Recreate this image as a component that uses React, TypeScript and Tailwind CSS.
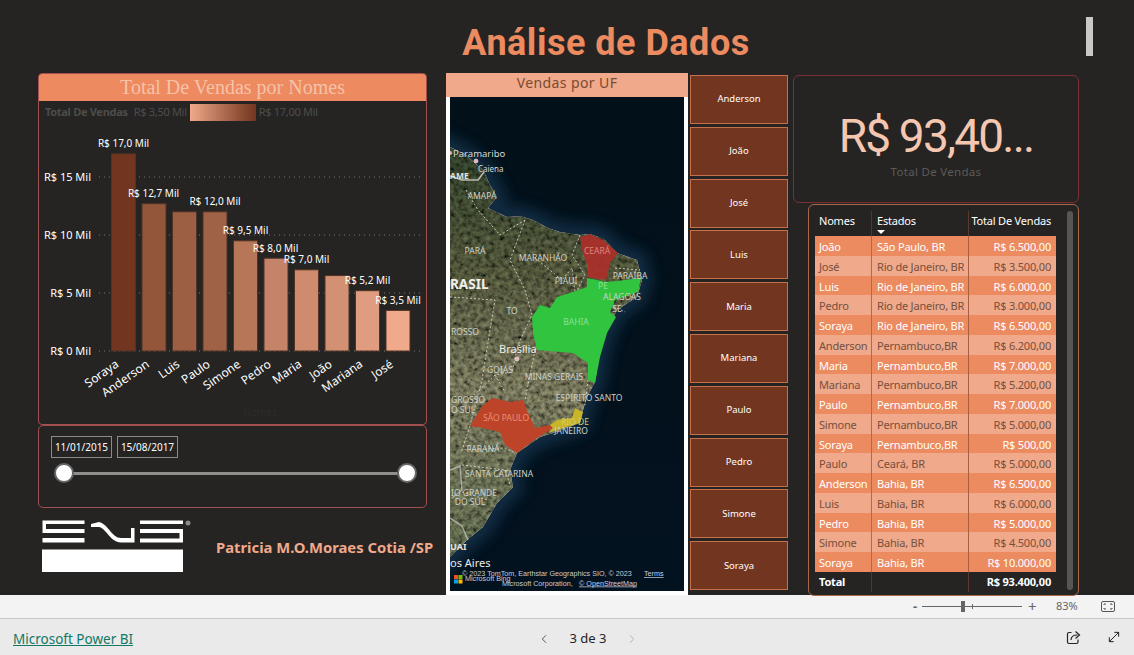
import React from 'react';
import { ChevronLeft, ChevronRight, MoveDiagonal } from 'lucide-react';

const bars = [
  { nome: 'Soraya', valor: 17, label: 'R$ 17,0 Mil', cor: '#72351f', lx: 123.5 },
  { nome: 'Anderson', valor: 12.7, label: 'R$ 12,7 Mil', cor: '#93563b', lx: 153.5 },
  { nome: 'Luis', valor: 12, label: '', cor: '#9c5f43', lx: 0 },
  { nome: 'Paulo', valor: 12, label: 'R$ 12,0 Mil', cor: '#9f6246', lx: 215 },
  { nome: 'Simone', valor: 9.5, label: 'R$ 9,5 Mil', cor: '#b87658', lx: 245.5 },
  { nome: 'Pedro', valor: 8, label: 'R$ 8,0 Mil', cor: '#c5836a', lx: 275.5 },
  { nome: 'Maria', valor: 7, label: 'R$ 7,0 Mil', cor: '#ce8b6e', lx: 306.5 },
  { nome: 'João', valor: 6.5, label: '', cor: '#d39174', lx: 0 },
  { nome: 'Mariana', valor: 5.2, label: 'R$ 5,2 Mil', cor: '#e09c80', lx: 367.5 },
  { nome: 'José', valor: 3.5, label: 'R$ 3,5 Mil', cor: '#f0a98a', lx: 398 },
];

const slicers = ['Anderson', 'João', 'José', 'Luis', 'Maria', 'Mariana', 'Paulo', 'Pedro', 'Simone', 'Soraya'];

const rows = [
  ['João', 'São Paulo, BR', 'R$ 6.500,00'],
  ['José', 'Rio de Janeiro, BR', 'R$ 3.500,00'],
  ['Luis', 'Rio de Janeiro, BR', 'R$ 6.000,00'],
  ['Pedro', 'Rio de Janeiro, BR', 'R$ 3.000,00'],
  ['Soraya', 'Rio de Janeiro, BR', 'R$ 6.500,00'],
  ['Anderson', 'Pernambuco,BR', 'R$ 6.200,00'],
  ['Maria', 'Pernambuco,BR', 'R$ 7.000,00'],
  ['Mariana', 'Pernambuco,BR', 'R$ 5.200,00'],
  ['Paulo', 'Pernambuco,BR', 'R$ 7.000,00'],
  ['Simone', 'Pernambuco,BR', 'R$ 5.000,00'],
  ['Soraya', 'Pernambuco,BR', 'R$ 500,00'],
  ['Paulo', 'Ceará, BR', 'R$ 5.000,00'],
  ['Anderson', 'Bahia, BR', 'R$ 6.500,00'],
  ['Luis', 'Bahia, BR', 'R$ 6.000,00'],
  ['Pedro', 'Bahia, BR', 'R$ 5.000,00'],
  ['Simone', 'Bahia, BR', 'R$ 4.500,00'],
  ['Soraya', 'Bahia, BR', 'R$ 10.000,00'],
];

const mapLabels: [string, number, number][] = [
  ['AMAPÁ', 482, 199],
  ['PARÁ', 475, 254],
  ['MARANHÃO', 543, 261],
  ['PIAUÍ', 566, 284],
  ['PARAÍBA', 630, 279],
  ['ALAGOAS', 622, 300],
  ['SE', 617, 312],
  ['TO', 512, 314],
  ['GOIÁS', 500, 373],
  ['MINAS GERAIS', 554, 380],
  ['ESPÍRITO SANTO', 589, 401],
  ['PARANÁ', 483, 452],
  ['SANTA CATARINA', 499, 477],
  ['DO SUL', 470, 505],
];

const coast =
  'M450 147 L466 155 L483 170 L490 185 L497 197 L488 208 L507 217 L520 216 L533 220 L548 228 L560 232 L580 235 L590 234 L604 239 L617 253 L637 260 L642 280 L637 297 L617 310 L612 320 L607 330 L600 350 L595 382 L587 397 L583 410 L580 423 L553 433 L540 437 L517 453 L510 470 L513 487 L497 503 L483 527 L467 540 L450 557 Z';

const Chart = () => (
  <svg viewBox="39 122 387 300" className="block w-[387px] h-[300px]" fontFamily="'Noto Sans', sans-serif">
    {[
      [177, 'R$ 15 Mil'],
      [235, 'R$ 10 Mil'],
      [293, 'R$ 5 Mil'],
      [351, 'R$ 0 Mil'],
    ].map(([y, t]) => (
      <g key={t}>
        <line x1="99" x2="423" y1={y} y2={y} stroke="#77756f" strokeWidth="1" strokeDasharray="1 4" />
        <text x="91" y={Number(y) + 4} textAnchor="end" fontSize="11" fill="#fff">
          {t}
        </text>
      </g>
    ))}
    {bars.map((b, i) => {
      const x = 111.5 + i * 30.5;
      const h = b.valor * 11.6;
      return (
        <g key={b.nome}>
          <rect x={x} y={351 - h} width="24" height={h} fill={b.cor} stroke="#4f3326" strokeWidth="1" />
          <text transform={`translate(${x + 8} 366) rotate(-35)`} textAnchor="end" fontSize="12" fill="#fff">
            {b.nome}
          </text>
        </g>
      );
    })}
    {bars
      .filter((b) => b.label)
      .map((b) => (
        <text key={b.nome} x={b.lx} y={351 - b.valor * 11.6 - 6.5} textAnchor="middle" fontSize="10" fill="#fff">
          {b.label}
        </text>
      ))}
    <text x="260" y="416" textAnchor="middle" fontSize="10" fill="#2d2c2b">
      Nomes
    </text>
  </svg>
);

const BrazilMap = () => (
  <svg viewBox="450 97 234 494" className="block w-[234px] h-[494px]" fontFamily="'Noto Sans', sans-serif">
    <defs>
      <linearGradient id="land" x1="0" y1="0" x2="0" y2="1">
        <stop offset="0" stopColor="#2e3d28" />
        <stop offset="0.3" stopColor="#4f5439" />
        <stop offset="0.6" stopColor="#75745a" />
        <stop offset="1" stopColor="#5a6549" />
      </linearGradient>
      <linearGradient id="ocean" x1="0" y1="0" x2="0" y2="1">
        <stop offset="0" stopColor="#021019" />
        <stop offset="1" stopColor="#03121f" />
      </linearGradient>
      <filter id="grain" x="0" y="0" width="100%" height="100%">
        <feTurbulence type="fractalNoise" baseFrequency="0.22" numOctaves="3" seed="7" />
        <feColorMatrix values="1.3 0 0 0 -0.15  1.3 0 0 0 -0.15  1.3 0 0 0 -0.15  0 0 0 0 1" />
        <feComposite in2="SourceAlpha" operator="in" result="noise" />
        <feBlend in="noise" in2="SourceGraphic" mode="overlay" />
      </filter>
      <filter id="soft" x="-20%" y="-20%" width="140%" height="140%">
        <feGaussianBlur stdDeviation="7" />
      </filter>
    </defs>
    <rect x="450" y="97" width="234" height="494" fill="url(#ocean)" />
    <path d={coast} fill="none" stroke="#123650" strokeWidth="20" filter="url(#soft)" opacity="0.75" />
    <path d={coast} fill="url(#land)" filter="url(#grain)" />
    <path d="M450 176 L462 180 L478 180 L484 172" fill="none" stroke="#b9bfb4" strokeWidth="1.5" />
    <path d="M450 518 L462 526 L468 540 M450 470 L460 466 L462 490 L452 498" fill="none" stroke="#b9bfb4" strokeWidth="1.5" opacity="0.8" />
    <g fill="none" stroke="#e2e2d6" strokeWidth="1" strokeDasharray="2 2" opacity="0.8">
      <path d="M466 190 L478 210 L500 235 L525 220" />
      <path d="M525 220 L510 260 L525 290 L532 315 L518 345 L512 372 L495 375 L474 395" />
      <path d="M580 235 L572 255 L585 275 L575 295" />
      <path d="M535 258 L562 280 L572 268 L575 292" />
      <path d="M450 297 L495 300 L490 330 L482 380 L470 425" />
      <path d="M518 345 L535 350 M495 375 L505 392 M535 350 L525 400 M588 380 L585 405" />
      <path d="M470 426 L462 450 L505 448 L513 452 M462 465 L505 470 L510 485 M462 492 L488 500" />
      <path d="M615 268 L640 270 M612 290 L635 298 M610 305 L625 312" />
    </g>
    <path d="M580 237 L590 234 L603 240 L618 253 L610 263 L606 280 L587 277 L588 267 L582 250 Z" fill="#a9302a" opacity="0.95" />
    <path
      d="M587 278 L606 282 L617 281 L641 278 L638 292 L615 300 L610 312 L616 317 L607 333 L600 357 L595 383 L588 380 L588 363 L573 353 L537 350 L533 333 L532 317 L540 305 L550 308 L557 297 L573 292 L587 287 Z"
      fill="#31c43e"
    />
    <path
      d="M470 426 L483 405 L493 398 L510 402 L523 400 L528 413 L535 428 L550 425 L553 428 L537 438 L517 453 L505 445 L500 432 L483 428 Z"
      fill="#bd4329"
    />
    <path d="M550 425 L557 420 L572 418 L575 408 L583 412 L580 423 L563 428 L548 433 L553 428 Z" fill="#c9b628" />
    <g fontSize="8.5" fill="#cdd0c8" textAnchor="middle">
      {mapLabels.map(([t, x, y]) => (
        <text key={t} x={x} y={y}>
          {t}
        </text>
      ))}
      <text x="451" y="335" textAnchor="start">ROSSO</text>
      <text x="451" y="403" textAnchor="start">GROSSO</text>
      <text x="451" y="412.5" textAnchor="start">O SUL</text>
      <text x="451" y="496" textAnchor="start">IO GRANDE</text>
      <text x="575" y="425" fill="#d8c96c">RIO DE</text>
      <text x="571" y="434">JANEIRO</text>
      <text x="597" y="254" fill="#e08480">CEARÁ</text>
      <text x="603" y="289" fill="#8fe098">PE</text>
      <text x="576" y="325" fill="#8fe098">BAHIA</text>
      <text x="506" y="421" fill="#ea8f75">SÃO PAULO</text>
    </g>
    <circle cx="450" cy="153" r="2" fill="#f0b0b8" />
    <circle cx="476" cy="161" r="2" fill="#f0b0b8" stroke="#fff" strokeWidth="0.5" />
    <circle cx="517" cy="359" r="2" fill="#f0b0b8" stroke="#fff" strokeWidth="0.5" />
    <text x="453" y="157" fontSize="9.5" fill="#d8d8d2">Paramaribo</text>
    <text x="478" y="172" fontSize="8" fill="#d8d8d2">Caiena</text>
    <text x="450" y="179" fontSize="8.5" fontWeight="700" fill="#e4e4de">AME</text>
    <text x="450" y="289" fontSize="13.5" fontWeight="700" fill="#f0f0ea">RASIL</text>
    <text x="499" y="353" fontSize="11" fill="#ecece6">Brasília</text>
    <text x="450" y="550" fontSize="9" fontWeight="700" fill="#e4e4de">UAI</text>
    <text x="450" y="567" fontSize="11" fill="#ecece6">os Aires</text>
    <g fontFamily="'Liberation Sans', sans-serif" fontSize="7.2" fill="#c9ccd2">
      <text x="462" y="576">© 2023 TomTom, Earthstar Geographics SIO, © 2023</text>
      <text x="644" y="576" textDecoration="underline" fill="#c6d0f0">Terms</text>
      <text x="465" y="581">Microsoft Bing</text>
      <text x="502" y="585.5">Microsoft Corporation,</text>
      <text x="579" y="585.5" textDecoration="underline" fill="#c6d0f0">© OpenStreetMap</text>
    </g>
    <rect x="454" y="575" width="4" height="4" fill="#f25022" />
    <rect x="458.5" y="575" width="4" height="4" fill="#7fba00" />
    <rect x="454" y="579.5" width="4" height="4" fill="#00a4ef" />
    <rect x="458.5" y="579.5" width="4" height="4" fill="#ffb900" />
  </svg>
);

const SnsLogo = () => (
  <svg viewBox="42 520 150 53" className="block w-[150px] h-[53px]">
    <g fill="#fff">
      <path d="M42.5 520.5 H84.5 V524 H46 V529 H84.5 V533 H42.5 Z" />
      <rect x="42.5" y="538" width="42" height="4.5" />
      <path d="M91 524 L99 522 C108 524 112 538 121 538 H131 V528 H134.5 V542.5 H121 C110 542 106 528 99 527 H91 Z" />
      <rect x="140" y="520.5" width="43" height="3.5" />
      <path d="M140 529 H183 V542.5 H140 V538.5 H179.5 V533 H140 Z" />
      <rect x="42" y="549.5" width="141" height="22.5" />
    </g>
    <circle cx="188" cy="523" r="2.5" fill="#8a8a8a" />
  </svg>
);

export default function App() {
  return (
    <div className="w-[1134px] h-[655px] overflow-hidden flex flex-col bg-[#252423] font-['Noto_Sans',sans-serif]">
      {/* Report canvas */}
      <div className="relative h-[595px] shrink-0">
        <h1 className="h-[73px] pt-[17px] pl-[78px] text-center text-[36px] leading-[52px] font-bold tracking-[0.5px] text-[#ec8a60] font-['Roboto',sans-serif]">
          Análise de Dados
        </h1>
        <div className="absolute left-[1086px] top-[17px] w-[7px] h-[39px] bg-[#c8c8c8]" />

        <div className="flex pl-[38px]">
          {/* Left column */}
          <div className="w-[389px] flex flex-col">
            <div className="h-[352px] border border-[#a34f50] rounded-[4px] overflow-hidden">
              <div className="h-[27px] bg-[#ed8a60] text-center text-[20px] leading-[27px] text-[#f5c2a8] font-['Liberation_Serif',serif]">
                Total De Vendas por Nomes
              </div>
              <div className="h-[21px] pl-[6px] pt-[1px] flex items-center text-[11px] tracking-[-0.3px] text-[#4d4c4a]">
                <b className="font-bold mr-[6px]">Total De Vendas</b>
                <span>R$ 3,50 Mil</span>
                <div className="w-[66px] h-[17px] mx-[3px] bg-gradient-to-r from-[#f0a98a] to-[#72351f]" />
                <span>R$ 17,00 Mil</span>
              </div>
              <Chart />
            </div>

            <div className="h-[83px] border border-[#a34f50] rounded-[5px] pt-[10px] px-[12px]">
              <div className="flex gap-[5px]">
                <div className="w-[61px] h-[22px] border border-[#8a8a88] text-[10px] leading-[20px] text-center text-white">
                  11/01/2015
                </div>
                <div className="w-[61px] h-[22px] border border-[#8a8a88] text-[10px] leading-[20px] text-center text-white">
                  15/08/2017
                </div>
              </div>
              <div className="relative h-[20px] mt-[5px] ml-[13px] w-[343px] flex items-center">
                <div className="w-full h-[3px] bg-[#8e8e8c]" />
                <div className="absolute left-[-10px] top-0 w-[20px] h-[20px] rounded-full bg-white border-2 border-[#666]" />
                <div className="absolute right-[-10px] top-0 w-[20px] h-[20px] rounded-full bg-white border-2 border-[#666]" />
              </div>
            </div>

            <div className="flex mt-[12px] h-[56px]">
              <div className="w-[178px] pl-[4px] shrink-0">
                <SnsLogo />
              </div>
              <div className="pt-[17px] text-[14.8px] leading-[20px] font-bold text-[#f0a98a] whitespace-nowrap">
                Patricia M.O.Moraes Cotia /SP
              </div>
            </div>
          </div>

          {/* Map */}
          <div className="w-[242px] ml-[19px] flex flex-col">
            <div className="h-[24px] bg-[#f0a98a] text-center text-[14px] leading-[20px] text-[#7a4a33] tracking-[0.4px]">
              Vendas por UF
            </div>
            <div className="h-[498px] bg-white px-[4px]">
              <BrazilMap />
            </div>
          </div>

          {/* Slicer */}
          <div className="w-[98px] ml-[2px] pt-[2px] flex flex-col gap-[2.8px]">
            {slicers.map((s) => (
              <div
                key={s}
                className="h-[49px] bg-[#72351f] border border-[#c4704a] flex items-center justify-center text-[9.5px] text-white"
              >
                {s}
              </div>
            ))}
          </div>

          {/* Right column */}
          <div className="w-[286px] ml-[5px] pt-[2px] flex flex-col">
            <div className="h-[128px] border border-[#7a2f33] rounded-[6px] flex flex-col items-center pt-[34px]">
              <div className="text-[46px] leading-[52px] text-[#f5c7b0] font-['Roboto',sans-serif] font-normal tracking-[-1.8px]">
                R$ 93,40...
              </div>
              <div className="text-[11.5px] leading-[16px] mt-[2px] text-[#5c5b59] tracking-[0.3px]">Total De Vendas</div>
            </div>

            <div className="relative h-[392px] ml-[15px] mt-[1px] border border-[#a8684c] rounded-[6px] pt-[6px] pl-[6px]">
              <div className="w-[241px] text-[11px] leading-[18px] tracking-[-0.2px]">
                <div className="flex h-[25px] text-white">
                  <div className="w-[57px] pl-[4px] pt-[1px] border-r border-[#4a3a32]">Nomes</div>
                  <div className="relative w-[97px] pl-[5px] pt-[1px] border-r border-[#5a3a2a]">
                    Estados
                    <div className="absolute left-[5px] top-[19px] w-0 h-0 border-x-[4px] border-x-transparent border-t-[4px] border-t-white" />
                  </div>
                  <div className="flex-1 pr-[5px] pt-[1px] text-right">Total De Vendas</div>
                </div>
                {rows.map((r, i) => (
                  <div
                    key={i}
                    className={
                      i % 2 === 0
                        ? 'flex h-[19.76px] bg-[#ec8a60] text-white'
                        : 'flex h-[19.76px] bg-[#f0a98a] text-[#75503e]'
                    }
                  >
                    <div className="w-[57px] pl-[4px] pt-[2px] border-r border-[#b5694a]">{r[0]}</div>
                    <div className="w-[97px] pl-[5px] pt-[2px] border-r border-[#a85f40]">{r[1]}</div>
                    <div className="flex-1 pr-[5px] pt-[2px] text-right">{r[2]}</div>
                  </div>
                ))}
                <div className="flex h-[20px] font-bold text-white">
                  <div className="w-[57px] pl-[4px] pt-[1px] border-r border-[#3f3b38]">Total</div>
                  <div className="w-[97px] border-r border-[#5a3a2a]" />
                  <div className="flex-1 pr-[5px] pt-[1px] text-right">R$ 93.400,00</div>
                </div>
              </div>
              <div className="absolute left-[258px] top-[6px] w-[6px] h-[379px] rounded-[3px] bg-[#565654]" />
            </div>
          </div>
        </div>
      </div>

      {/* Zoom bar */}
      <div className="h-[24px] shrink-0 bg-[#f3f3f3] border-b border-[#c8c8c8] flex items-center pl-[913px] text-[#666]">
        <span className="w-[9px] text-[13px] leading-none font-bold">-</span>
        <div className="relative w-[100px] h-[1px] bg-[#666]">
          <div className="absolute left-[39px] top-[-5px] w-[4px] h-[11px] bg-[#666]" />
          <div className="absolute left-[50px] top-[-2px] w-[1px] h-[5px] bg-[#666]" />
        </div>
        <span className="ml-[6px] w-[20px] text-[15px] leading-none">+</span>
        <span className="ml-[8px] text-[11px]">83%</span>
        <svg viewBox="0 0 14 12" className="w-[14px] h-[12px] ml-[23px]" fill="none" stroke="#555">
          <rect x="0.5" y="0.5" width="13" height="10" rx="1.5" />
          <path d="M3 4 V3 H5 M9 3 H11 V4 M3 7 V8 H5 M9 8 H11 V7" />
        </svg>
      </div>

      {/* Pagination bar */}
      <div className="relative flex-1 bg-[#eaeaea] flex items-center justify-between pl-[13px] pr-[12px]">
        <a className="mt-[4px] text-[13.5px] underline text-[#117865]">Microsoft Power BI</a>
        <div className="absolute left-[537px] top-[10px] flex items-center text-[13px] text-[#252423]">
          <ChevronLeft size={14} strokeWidth={1.5} className="text-[#444]" />
          <span className="w-[74px] text-center">3 de 3</span>
          <ChevronRight size={14} strokeWidth={1.5} className="text-[#aaa]" />
        </div>
        <div className="flex items-center gap-[25px]">
          <svg viewBox="0 0 15 15" className="w-[15px] h-[15px]" fill="none" stroke="#252423" strokeWidth="1.2">
            <path d="M5.5 2.5 H3 Q1.5 2.5 1.5 4 V12 Q1.5 13.5 3 13.5 H10.5 Q12 13.5 12 12 V9.5" />
            <path d="M5 10 C5 7 7.5 5 11.5 5 M9.5 1.5 L13.5 5 L9.5 8.5" />
          </svg>
          <MoveDiagonal size={16} strokeWidth={1.5} className="text-[#252423]" />
        </div>
      </div>
    </div>
  );
}
